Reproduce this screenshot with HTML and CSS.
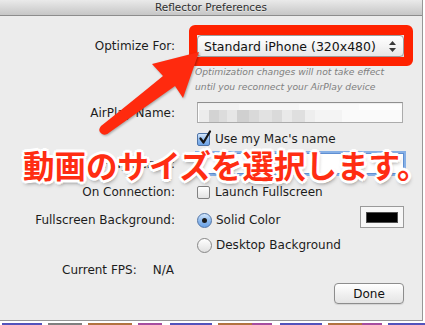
FILE: index.html
```html
<!DOCTYPE html>
<html lang="en">

<head>
    <meta charset="UTF-8">
    <meta name="viewport" content="width=device-width, initial-scale=1.0">
    <title>Reflector Preferences</title>
    <link rel="stylesheet" href="styles.css">
</head>

<body>
    <div class="page">
        <div class="window">
            <div class="titlebar">Reflector Preferences</div>
            <div class="prefs">
                <div class="row row-popup">
                    <div class="label">Optimize For:</div>
                    <div class="control popup-wrap">
                        <div class="popup">
                            <span>Standard iPhone (320x480)</span>
                            <svg class="popup-arrows" width="7" height="11" viewBox="0 0 7 11">
                                <path d="M3.5 0 L7 4 L0 4 Z M0 7 L7 7 L3.5 11 Z" fill="#3a3a3a" />
                            </svg>
                        </div>
                    </div>
                </div>
                <p class="hint">Optimization changes will not take effect<br>until you reconnect your AirPlay device</p>

                <div class="row row-name">
                    <div class="label">AirPlay Name:</div>
                    <div class="control field field-blurred"></div>
                </div>
                <div class="row row-check">
                    <div class="label"></div>
                    <div class="control option">
                        <span class="check is-on">
                            <svg class="tick" width="14" height="15" viewBox="0 0 14 15">
                                <path d="M2.5 8.5 L5.5 12.5 L12 1.5" fill="none" stroke="#151515" stroke-width="2.2" stroke-linecap="round" stroke-linejoin="round" />
                            </svg>
                        </span>
                        Use my Mac's name
                    </div>
                </div>
                <div class="row row-server">
                    <div class="label">AirPlay Server:</div>
                    <div class="control field field-focus"></div>
                </div>
                <div class="row row-launch">
                    <div class="label">On Connection:</div>
                    <div class="control option"><span class="check"></span>Launch Fullscreen</div>
                </div>
                <div class="row row-bg">
                    <div class="label">Fullscreen Background:</div>
                    <div class="control bg-choice">
                        <div class="option"><span class="radio is-on"></span>Solid Color</div>
                        <div class="color-well"><div class="swatch"></div></div>
                    </div>
                </div>
                <div class="row row-desktop">
                    <div class="label"></div>
                    <div class="control option"><span class="radio"></span>Desktop Background</div>
                </div>

                <div class="fps">
                    <span>Current FPS:</span>
                    <span>N/A</span>
                </div>
                <div class="actions">
                    <button class="button" type="button">Done</button>
                </div>
            </div>
        </div>
        <div class="source"></div>

        <p class="callout">動画のサイズを選択します。</p>

        <svg class="arrow" width="425" height="325" viewBox="0 0 425 325">
            <path d="M199 52 L152 64 L163 76 Q130 103 101 126 Q97 131 102 134 Q106 136 110 132 L175 86 L183 98 Z" fill="#ff2a0e" />
        </svg>
    </div>
</body>

</html>
```

FILE: styles.css
```css
body {
    margin: 0;
    background: #fff;
    font-family: "DejaVu Sans", sans-serif;
    font-size: 12px;
    color: #1c1c1c;
}

.page {
    position: relative;
    width: 425px;
    height: 325px;
    overflow: hidden;
}

.window {
    width: 422px;
    height: 320px;
    background: #ececec;
    border-right: 1px solid #979797;
    border-bottom: 1px solid #979797;
}

.titlebar {
    height: 15px;
    line-height: 15px;
    text-align: center;
    font-size: 10.5px;
    color: #2e2e2e;
    background: linear-gradient(#eaeaea, #d4d4d4 60%, #c6c6c6);
    border-bottom: 1px solid #8c8c8c;
    text-shadow: 0 1px 0 rgba(255, 255, 255, 0.5);
}

.prefs {
    padding-top: 19px;
}

.row {
    display: flex;
    align-items: center;
}

.label {
    flex: none;
    width: 175px;
    margin-right: 22px;
    text-align: right;
}

.control {
    width: 207px;
}

/* popup button + red annotation box */
.popup-wrap {
    position: relative;
}

.popup-wrap::before {
    content: "";
    position: absolute;
    top: -10px;
    left: -8px;
    right: -9px;
    bottom: -9px;
    border-style: solid;
    border-color: #ff2200;
    border-width: 10px 9px 9px 8px;
    border-radius: 6px;
}

.popup {
    height: 20px;
    display: flex;
    align-items: center;
    justify-content: space-between;
    padding: 0 7px 0 6px;
    border: 1px solid #9d9d9d;
    border-radius: 4px;
    background: linear-gradient(#fff, #f4f4f4 50%, #e7e7e7);
    box-shadow: 0 1px 1px rgba(0, 0, 0, 0.12);
    font-size: 12.5px;
    color: #111;
}

.hint {
    margin: 7px 0 0 195px;
    font-size: 9.2px;
    font-style: italic;
    line-height: 15px;
    color: #808080;
}

/* text fields */
.field {
    box-sizing: border-box;
    height: 21px;
    border: 1px solid #ababab;
    border-top-color: #8f8f8f;
    background: #fff;
    box-shadow: inset 0 1px 1px rgba(0, 0, 0, 0.07);
}

.row-name {
    margin-top: 8px;
}

.row-name .field {
    width: 206px;
}

.field-blurred {
    background:
        linear-gradient(90deg, #ececec 0 10px, #d3d3d3 10px 20px, #dcdcdc 20px 28px, #e6e6e6 28px 38px,
            #d0d0d0 38px 50px, #d9d9d9 50px 60px, #e2e2e2 60px 73px, #dadada 73px 83px, #e9e9e9 83px 93px,
            #dfdfdf 93px 106px, #eeeeee 106px 116px, #f4f4f4 116px 143px, #fafafa 143px) 1px 7px / 100% 12px no-repeat,
        linear-gradient(90deg, #f2f2f2 0 40px, #f6f6f6 40px 100px, #fafafa 100px 160px, #fdfdfd 160px) 1px 1px / 100% 6px no-repeat,
        #fff;
}

.field-focus {
    border-color: #5f8fd2;
    box-shadow: 0 0 0 2px #86b0e6;
}

.row-check {
    margin-top: 8px;
    height: 16px;
}

.row-server {
    margin-top: 6px;
}

.row-launch {
    margin-top: 10px;
    height: 16px;
}

.row-bg {
    margin-top: 6px;
    align-items: flex-end;
}

.row-bg .label {
    line-height: 16px;
}

.row-desktop {
    margin-top: 9px;
    height: 16px;
}

/* checkboxes and radios */
.option {
    display: flex;
    align-items: center;
    height: 16px;
}

.check {
    position: relative;
    flex: none;
    box-sizing: border-box;
    width: 13px;
    height: 13px;
    margin-right: 5px;
    border: 1px solid #818181;
    border-radius: 2px;
    background: linear-gradient(#fff, #e3e3e3);
}

.check.is-on {
    border-color: #4f74a8;
    background: linear-gradient(#d4e7fb, #93bdef 50%, #6da3e6);
}

.tick {
    position: absolute;
    left: 0;
    top: -4px;
}

.radio {
    flex: none;
    box-sizing: border-box;
    width: 15px;
    height: 15px;
    margin-right: 4px;
    border: 1px solid #878787;
    border-radius: 50%;
    background: linear-gradient(#fff, #e0e0e0);
    display: flex;
    align-items: center;
    justify-content: center;
}

.radio.is-on {
    border-color: #5174a6;
    background: linear-gradient(#d4e7fb, #90bbee 50%, #6ba2e6);
}

.radio.is-on::after {
    content: "";
    width: 5px;
    height: 5px;
    border-radius: 50%;
    background: #1a1a1a;
}

.bg-choice {
    display: flex;
    align-items: flex-end;
    justify-content: space-between;
}

.color-well {
    box-sizing: border-box;
    width: 44px;
    height: 22px;
    padding: 5px 5px 4px;
    border: 1px solid #9a9a9a;
    background: #f7f7f7;
}

.swatch {
    box-sizing: border-box;
    height: 100%;
    background: #000;
    border: 1px solid #505050;
}

.fps {
    display: flex;
    align-items: center;
    gap: 16px;
    height: 16px;
    margin-top: 9px;
    padding-left: 62px;
}

.actions {
    display: flex;
    justify-content: flex-end;
    margin: 5px 18px 0 0;
}

.button {
    box-sizing: border-box;
    width: 70px;
    height: 21px;
    padding: 0;
    border: 1px solid #8d8d8d;
    border-radius: 4px;
    background: linear-gradient(#fff, #f1f1f1 50%, #e4e4e4);
    box-shadow: 0 1px 1px rgba(0, 0, 0, 0.1);
    font: inherit;
    color: #111;
}

/* tops of the code lines behind the window */
.source {
    height: 2px;
    margin: 2px 0 0 2px;
    background: linear-gradient(90deg,
        #1a1aa6 0 40px, transparent 40px 46px, #555 46px 80px, transparent 80px 86px,
        #994500 86px 130px, transparent 130px 136px, #881280 136px 160px, transparent 160px 168px,
        #1a1aa6 168px 210px, transparent 210px 216px, #994500 216px 250px, #881280 250px 270px,
        transparent 270px 278px, #1a1aa6 278px 320px, transparent 320px 326px, #994500 326px 360px,
        #881280 360px 380px, transparent 380px 386px, #1a1aa6 386px);
    opacity: 0.75;
}

/* annotations drawn over the screenshot */
.callout {
    position: absolute;
    left: 23px;
    top: 148px;
    margin: 0;
    font-family: "Noto Sans CJK JP", sans-serif;
    font-weight: 700;
    font-size: 31.5px;
    line-height: 32px;
    white-space: nowrap;
    color: #ff2d12;
    text-shadow:
        3px 0 0 #fff, -3px 0 0 #fff, 0 3px 0 #fff, 0 -3px 0 #fff,
        2px 2px 0 #fff, -2px 2px 0 #fff, 2px -2px 0 #fff, -2px -2px 0 #fff,
        1px 3px 4px rgba(0, 0, 0, 0.55);
}

.arrow {
    position: absolute;
    left: 0;
    top: 0;
    filter: drop-shadow(1px 1px 1px rgba(0, 0, 0, 0.3));
}
```
